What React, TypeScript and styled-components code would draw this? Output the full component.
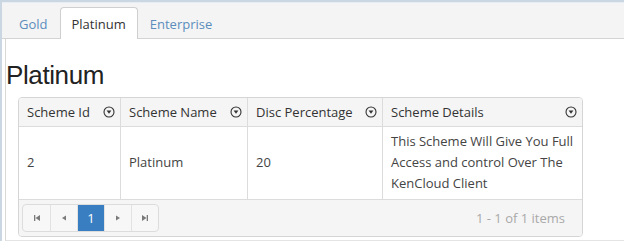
import React from "react";
import styled, { createGlobalStyle } from "styled-components";

const Global = createGlobalStyle`
  html, body { margin: 0; padding: 0; background: #fff; }
  body { font-family: "Open Sans", "Liberation Sans", sans-serif; }
  * { box-sizing: border-box; }
`;

const Frame = styled.div`
  width: 624px;
  height: 241px;
  border-top: 2px solid #cad6e1;
  border-left: 2px solid #cad6e1;
  overflow: hidden;
  display: flex;
  flex-direction: column;
`;

const TabBar = styled.div`
  display: flex;
  align-items: flex-end;
  height: 37px;
  padding: 6px 0 0 5px;
  background: #f4f4f4;
  border-top: 1px solid #e6edf4;
  border-bottom: 1px solid #d4d4d4;
`;

const Tab = styled.div<{ $active?: boolean }>`
  height: 32px;
  padding: 0 11px;
  display: flex;
  align-items: center;
  font-size: 13px;
  color: ${(p) => (p.$active ? "#333" : "#5b8dbd")};
  background: ${(p) => (p.$active ? "#fff" : "transparent")};
  border: 1px solid ${(p) => (p.$active ? "#cfcfcf" : "transparent")};
  border-bottom: none;
  border-radius: 4px 4px 0 0;
  margin-bottom: -1px;
`;

const Panel = styled.div`
  flex: 1;
  margin-left: 3px;
  border-left: 1px solid #d8d8d8;
  border-bottom: 1px solid #e4e4e4;
`;

const Heading = styled.h1`
  margin: 21px 0 7px 0;
  font-family: "Liberation Sans", Arial, sans-serif;
  font-weight: normal;
  font-size: 26px;
  line-height: 30px;
  letter-spacing: -0.4px;
  color: #222;
`;

const Grid = styled.div`
  margin-left: 12px;
  width: 565px;
  border: 1px solid #d5d5d5;
  border-radius: 4px;
  overflow: hidden;
  display: grid;
  grid-template-columns: 101px 127px 135px 200px;
  font-size: 13px;
`;

const HeadCell = styled.div<{ $first?: boolean }>`
  height: 29px;
  padding: 0 5px 0 8px;
  display: flex;
  align-items: center;
  justify-content: space-between;
  background: #f5f5f5;
  color: #333;
  border-bottom: 1px solid #dcdcdc;
  border-left: ${(p) => (p.$first ? "none" : "1px solid #dcdcdc")};
  white-space: nowrap;
`;

const Cell = styled.div<{ $first?: boolean }>`
  min-height: 73px;
  padding: 4px 8px 5px 8px;
  display: flex;
  align-items: center;
  line-height: 21px;
  color: #444;
  border-bottom: 1px solid #dcdcdc;
  border-left: ${(p) => (p.$first ? "none" : "1px solid #dcdcdc")};
`;

const Pager = styled.div`
  grid-column: 1 / -1;
  height: 36px;
  padding: 0 17px 0 3px;
  display: flex;
  align-items: center;
  justify-content: space-between;
  background: #f5f5f5;
`;

const ButtonGroup = styled.div`
  display: flex;
  border: 1px solid #dcdcdc;
  border-radius: 4px;
  overflow: hidden;
  background: #f7f7f7;
`;

const PageButton = styled.div<{ $active?: boolean }>`
  width: 27px;
  height: 26px;
  display: flex;
  align-items: center;
  justify-content: center;
  font-size: 13px;
  color: ${(p) => (p.$active ? "#fff" : "#888")};
  background: ${(p) => (p.$active ? "#3a7ec2" : "transparent")};
  border-left: 1px solid #e2e2e2;
  &:first-child { border-left: none; }
`;

const Info = styled.div`
  color: #a9a9a9;
  font-size: 13px;
`;

const FilterIcon = () => (
  <svg width="12" height="12" viewBox="0 0 12 12">
    <circle cx="6" cy="6" r="5" fill="none" stroke="#333" strokeWidth="1.1" />
    <path d="M3.6 4.4 H8.4 L6 7.7 Z" fill="#333" />
  </svg>
);

const Nav = ({ kind }: { kind: "first" | "prev" | "next" | "last" }) => (
  <svg width="8" height="8" viewBox="0 0 8 8">
    {kind === "first" && (
      <>
        <rect x="1" y="1" width="1.3" height="6" fill="#7a7a7a" />
        <path d="M7 1 V7 L2.5 4 Z" fill="#7a7a7a" />
      </>
    )}
    {kind === "prev" && <path d="M6 1.5 V6.5 L2 4 Z" fill="#7a7a7a" />}
    {kind === "next" && <path d="M2 1.5 V6.5 L6 4 Z" fill="#7a7a7a" />}
    {kind === "last" && (
      <>
        <path d="M1 1 V7 L5.5 4 Z" fill="#7a7a7a" />
        <rect x="5.7" y="1" width="1.3" height="6" fill="#7a7a7a" />
      </>
    )}
  </svg>
);

const columns = ["Scheme Id", "Scheme Name", "Disc Percentage", "Scheme Details"];
const row = ["2", "Platinum", "20", "This Scheme Will Give You Full Access and control Over The KenCloud Client"];

export default function App() {
  return (
    <>
      <Global />
      <Frame>
        <TabBar>
          <Tab>Gold</Tab>
          <Tab $active>Platinum</Tab>
          <Tab>Enterprise</Tab>
        </TabBar>
        <Panel>
          <Heading>Platinum</Heading>
          <Grid>
            {columns.map((c, i) => (
              <HeadCell key={c} $first={i === 0}>
                <span>{c}</span>
                <FilterIcon />
              </HeadCell>
            ))}
            {row.map((v, i) => (
              <Cell key={i} $first={i === 0}>
                {v}
              </Cell>
            ))}
            <Pager>
              <ButtonGroup>
                <PageButton><Nav kind="first" /></PageButton>
                <PageButton><Nav kind="prev" /></PageButton>
                <PageButton $active>1</PageButton>
                <PageButton><Nav kind="next" /></PageButton>
                <PageButton><Nav kind="last" /></PageButton>
              </ButtonGroup>
              <Info>1 - 1 of 1 items</Info>
            </Pager>
          </Grid>
        </Panel>
      </Frame>
    </>
  );
}
